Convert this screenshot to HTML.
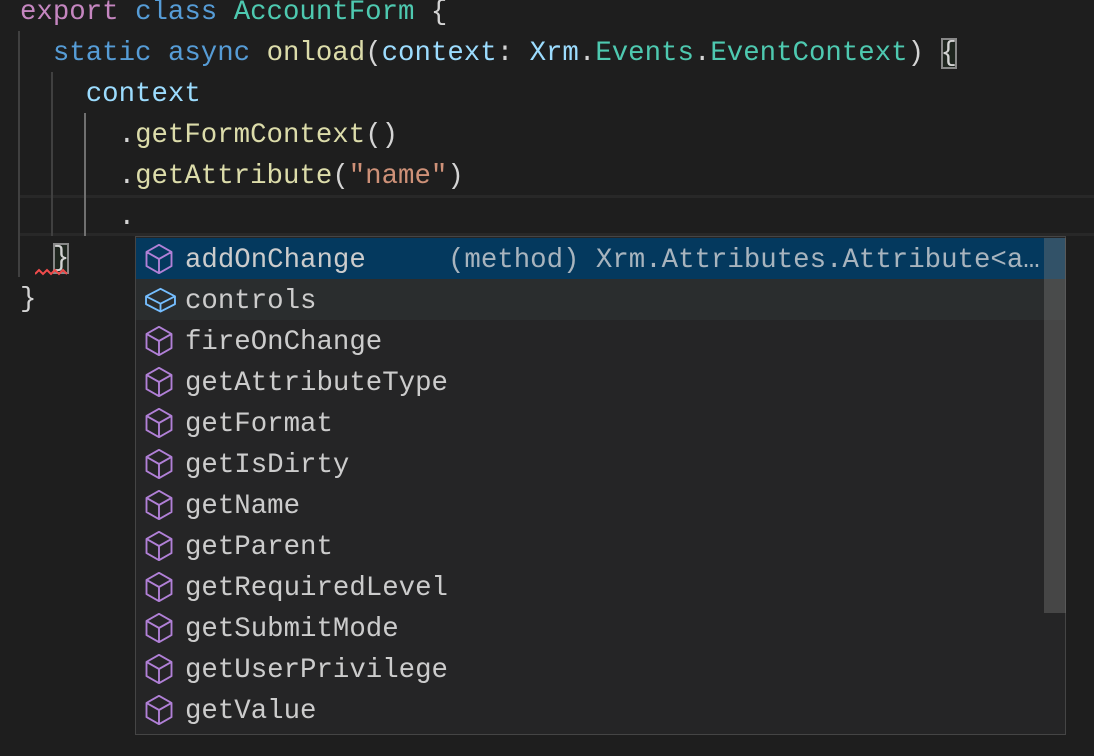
<!DOCTYPE html>
<html><head><meta charset="utf-8"><style>
html,body{margin:0;padding:0;background:#1e1e1e;width:1094px;height:756px;overflow:hidden}
body{position:relative;font-family:"Liberation Mono",monospace;font-size:27.4px;color:#d4d4d4}
.ln{position:absolute;left:20px;height:41px;line-height:45px;white-space:pre}
.k{color:#569cd6}.p{color:#c586c0}.t{color:#4ec9b0}.f{color:#dcdcaa}.v{color:#9cdcfe}.s{color:#ce9178}
.g{position:absolute;width:2px;background:#404040}
.sw{position:absolute;left:135px;top:236px;width:929px;height:497px;background:#252526;border:1px solid #454545}
.row{position:absolute;left:0;width:929px;height:41px;line-height:45px;white-space:pre;color:#cccccc}
.row svg{position:absolute;left:9px;top:6px}
.row span{position:absolute;left:49px}
</style></head><body>
<div style="position:absolute;left:20px;top:195px;width:1074px;height:35px;border-top:3px solid #282828;border-bottom:3px solid #282828"></div>
<div class="g" style="left:18px;top:31px;height:246px"></div>
<div class="g" style="left:51px;top:72px;height:164px"></div>
<div class="g" style="left:84px;top:113px;height:123px;background:#707070"></div>
<div class="ln" style="top:-10px"><span class="p">export</span> <span class="k">class</span> <span class="t">AccountForm</span> {</div>
<div class="ln" style="top:31px">  <span class="k">static</span> <span class="k">async</span> <span class="f">onload</span>(<span class="v">context</span>: <span class="v">Xrm</span>.<span class="t">Events</span>.<span class="t">EventContext</span>) <span style="outline:2px solid #888;outline-offset:-2px;background:#1f261f">{</span></div>
<div class="ln" style="top:72px">    <span class="v">context</span></div>
<div class="ln" style="top:113px">      .<span class="f">getFormContext</span>()</div>
<div class="ln" style="top:154px">      .<span class="f">getAttribute</span>(<span class="s">"name"</span>)</div>
<div class="ln" style="top:195px">      .</div>
<div class="ln" style="top:236px">  <span style="outline:2px solid #888;outline-offset:-2px;background:#1f261f">}</span></div>
<svg style="position:absolute;left:35px;top:268px" width="33" height="8"><path d="M0 6 L4 2 L8 6 L12 2 L16 6 L20 2 L24 6 L28 2 L32 6" stroke="#f14c4c" stroke-width="2" fill="none"/></svg>
<div class="ln" style="top:277px">}</div>
<div class="sw">
<div class="row" style="top:1px;background:#04395e"><svg width="28" height="30" viewBox="1.5 0.8 13 14.4"><path d="M8 1.2L14 4.6V11.4L8 14.8L2 11.4V4.6Z M2 4.6L8 8L14 4.6 M8 8V14.8" fill="none" stroke="#b180d7" stroke-width="0.9" stroke-linejoin="round"/></svg><span>addOnChange     <span style="position:static;color:#a8b4be">(method) Xrm.Attributes.Attribute&lt;a…</span></span></div>
<div class="row" style="top:42px;background:#2a2d2e"><svg width="31" height="30" viewBox="0.5 0.8 15 14.4"><path d="M1 6.2L8 2.6L15 6.2V10L8 13.6L1 10Z M1 6.2L8 9.8L15 6.2 M8 9.8V13.6" fill="none" stroke="#75beff" stroke-width="0.9" stroke-linejoin="round"/></svg><span>controls</span></div>
<div class="row" style="top:83px"><svg width="28" height="30" viewBox="1.5 0.8 13 14.4"><path d="M8 1.2L14 4.6V11.4L8 14.8L2 11.4V4.6Z M2 4.6L8 8L14 4.6 M8 8V14.8" fill="none" stroke="#b180d7" stroke-width="0.9" stroke-linejoin="round"/></svg><span>fireOnChange</span></div>
<div class="row" style="top:124px"><svg width="28" height="30" viewBox="1.5 0.8 13 14.4"><path d="M8 1.2L14 4.6V11.4L8 14.8L2 11.4V4.6Z M2 4.6L8 8L14 4.6 M8 8V14.8" fill="none" stroke="#b180d7" stroke-width="0.9" stroke-linejoin="round"/></svg><span>getAttributeType</span></div>
<div class="row" style="top:165px"><svg width="28" height="30" viewBox="1.5 0.8 13 14.4"><path d="M8 1.2L14 4.6V11.4L8 14.8L2 11.4V4.6Z M2 4.6L8 8L14 4.6 M8 8V14.8" fill="none" stroke="#b180d7" stroke-width="0.9" stroke-linejoin="round"/></svg><span>getFormat</span></div>
<div class="row" style="top:206px"><svg width="28" height="30" viewBox="1.5 0.8 13 14.4"><path d="M8 1.2L14 4.6V11.4L8 14.8L2 11.4V4.6Z M2 4.6L8 8L14 4.6 M8 8V14.8" fill="none" stroke="#b180d7" stroke-width="0.9" stroke-linejoin="round"/></svg><span>getIsDirty</span></div>
<div class="row" style="top:247px"><svg width="28" height="30" viewBox="1.5 0.8 13 14.4"><path d="M8 1.2L14 4.6V11.4L8 14.8L2 11.4V4.6Z M2 4.6L8 8L14 4.6 M8 8V14.8" fill="none" stroke="#b180d7" stroke-width="0.9" stroke-linejoin="round"/></svg><span>getName</span></div>
<div class="row" style="top:288px"><svg width="28" height="30" viewBox="1.5 0.8 13 14.4"><path d="M8 1.2L14 4.6V11.4L8 14.8L2 11.4V4.6Z M2 4.6L8 8L14 4.6 M8 8V14.8" fill="none" stroke="#b180d7" stroke-width="0.9" stroke-linejoin="round"/></svg><span>getParent</span></div>
<div class="row" style="top:329px"><svg width="28" height="30" viewBox="1.5 0.8 13 14.4"><path d="M8 1.2L14 4.6V11.4L8 14.8L2 11.4V4.6Z M2 4.6L8 8L14 4.6 M8 8V14.8" fill="none" stroke="#b180d7" stroke-width="0.9" stroke-linejoin="round"/></svg><span>getRequiredLevel</span></div>
<div class="row" style="top:370px"><svg width="28" height="30" viewBox="1.5 0.8 13 14.4"><path d="M8 1.2L14 4.6V11.4L8 14.8L2 11.4V4.6Z M2 4.6L8 8L14 4.6 M8 8V14.8" fill="none" stroke="#b180d7" stroke-width="0.9" stroke-linejoin="round"/></svg><span>getSubmitMode</span></div>
<div class="row" style="top:411px"><svg width="28" height="30" viewBox="1.5 0.8 13 14.4"><path d="M8 1.2L14 4.6V11.4L8 14.8L2 11.4V4.6Z M2 4.6L8 8L14 4.6 M8 8V14.8" fill="none" stroke="#b180d7" stroke-width="0.9" stroke-linejoin="round"/></svg><span>getUserPrivilege</span></div>
<div class="row" style="top:452px"><svg width="28" height="30" viewBox="1.5 0.8 13 14.4"><path d="M8 1.2L14 4.6V11.4L8 14.8L2 11.4V4.6Z M2 4.6L8 8L14 4.6 M8 8V14.8" fill="none" stroke="#b180d7" stroke-width="0.9" stroke-linejoin="round"/></svg><span>getValue</span></div>
<div style="position:absolute;left:908px;top:1px;width:22px;height:375px;background:rgba(121,121,121,0.4)"></div>
</div>
</body></html>
